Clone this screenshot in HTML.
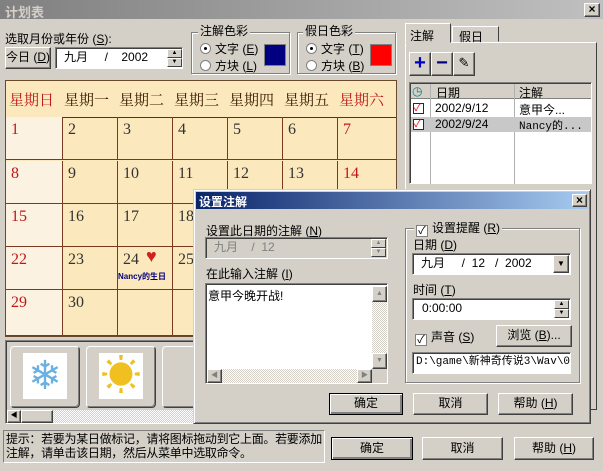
<!DOCTYPE html>
<html><head><meta charset="utf-8"><style>
*{box-sizing:border-box;margin:0;padding:0}
body{width:603px;height:471px;background:#d4d0c8;font-family:"Liberation Sans","Noto Sans CJK SC",sans-serif;font-size:12px;color:#000;position:relative;overflow:hidden}
.a{position:absolute}
.btn{position:absolute;background:#d4d0c8;border:1px solid;border-color:#fff #404040 #404040 #fff;box-shadow:inset -1px -1px #808080;text-align:center;font-size:12px}
.sunk{position:absolute;border:1px solid;border-color:#808080 #fff #fff #808080;box-shadow:inset 1px 1px #404040;background:#fff}
.grp{position:absolute;border:1px solid #808080;box-shadow:1px 1px #fff,inset 1px 1px #fff}
.lbl{position:absolute;background:#d4d0c8;padding:0 2px;font-size:12px;line-height:14px}
.cal{position:absolute;left:5px;top:80px;width:392px;height:257px;background:#fbe9bd;border:1px solid #6a4a2a}
.wd{position:absolute;top:8px;font-size:15px;color:#3a1a00;font-family:"Noto Serif CJK SC",serif;font-weight:normal}
.cell{position:absolute;width:55px;height:43px;border-right:1px solid #7a3a20;border-bottom:1px solid #7a3a20;font-family:"Liberation Serif","Noto Serif CJK SC",serif;font-size:16px;padding:4px 0 0 5px;color:#333}
.red{color:#c01818}
.dd{background:#fcf2e2}
.radio{display:inline-block;width:11px;height:11px;border-radius:50%;background:#fff;border:1px solid #808080;vertical-align:-1px;margin-right:4px;position:relative}
.radio.on:after{content:"";position:absolute;left:3px;top:3px;width:3px;height:3px;background:#000;border-radius:50%}
.chk{display:inline-block;width:12px;height:12px;background:#fff;border:1px solid #808080;vertical-align:-2px;margin-right:4px;font-size:11px;line-height:10px;text-align:center}
.spin{position:absolute;width:15px;background:#d4d0c8}
.spin div{height:50%;border:1px solid;border-color:#fff #404040 #404040 #fff;font-size:6px;text-align:center;line-height:6px}
</style></head><body>
<div class="a" style="left:0;top:0;width:603px;height:20px;background:linear-gradient(90deg,#808080,#c0c0c0);border-bottom:1px solid #d4d0c8"></div>
<div class="a" style="left:5px;top:2px;color:#d4d0c8;font-weight:bold;font-size:13px">计划表</div>
<div class="btn" style="left:584px;top:3px;width:16px;height:14px;line-height:11px;font-weight:bold">×</div>

<div class="a" style="left:5px;top:30px">选取月份或年份 (<u>S</u>):</div>
<div class="btn" style="left:5px;top:47px;width:46px;height:22px;line-height:19px">今日 (<u>D</u>)</div>
<div class="sunk" style="left:55px;top:47px;width:128px;height:22px;font-size:12px;line-height:19px;padding-left:8px">九月&nbsp;&nbsp;&nbsp;&nbsp;&nbsp;/&nbsp;&nbsp;&nbsp;&nbsp;2002</div>
<div class="spin" style="left:167px;top:49px;height:18px"><div>▲</div><div>▼</div></div>

<div class="grp" style="left:191px;top:32px;width:99px;height:42px"></div>
<div class="lbl" style="left:198px;top:24px">注解色彩</div>
<div class="a" style="left:200px;top:40px"><span class="radio on"></span>文字 (<u>E</u>)</div>
<div class="a" style="left:200px;top:57px"><span class="radio"></span>方块 (<u>L</u>)</div>
<div class="a" style="left:264px;top:44px;width:22px;height:22px;background:#000080;border:1px solid #808080"></div>

<div class="grp" style="left:297px;top:32px;width:99px;height:42px"></div>
<div class="lbl" style="left:303px;top:24px">假日色彩</div>
<div class="a" style="left:306px;top:40px"><span class="radio on"></span>文字 (<u>T</u>)</div>
<div class="a" style="left:306px;top:57px"><span class="radio"></span>方块 (<u>B</u>)</div>
<div class="a" style="left:370px;top:44px;width:22px;height:22px;background:#f00;border:1px solid #808080"></div>

<div class="cal">
<div class="wd red" style="left:3px">星期日</div><div class="wd" style="left:58px">星期一</div><div class="wd" style="left:113px">星期二</div><div class="wd" style="left:168px">星期三</div><div class="wd" style="left:223px">星期四</div><div class="wd" style="left:278px">星期五</div><div class="wd red" style="left:333px">星期六</div>
<div class="a" style="left:0;top:36px;width:390px;border-top:1px solid #6a2a10"></div>
</div>
<div id="grid"></div>
<script>
var g='',rows=[117,161,204,247,290],cols=[5,63,118,173,228,283,338];
for(var r=0;r<5;r++)for(var c=0;c<7;c++){var d=r*7+c+1;var t=d<=30?d:'';
g+='<div class="cell'+((c==0||c==6)?' red':'')+(c==0?' dd':'')+'" style="left:'+(cols[c]+(c==0?1:0))+'px;top:'+rows[r]+'px;width:'+(c==6?58:(c==0?57:55))+'px;'+(r==4?'height:46px;':'')+(c==6?'border-right:0;':'')+'">'+t+'</div>';}
document.getElementById('grid').innerHTML=g;
</script>
<div class="a" style="left:118px;top:271px;font-size:8px;color:#000080;font-weight:bold">Nancy的生日</div>
<div class="a" style="left:146px;top:246px;color:#d02020;font-size:18px">♥</div>

<div class="sunk" style="left:5px;top:340px;width:392px;height:84px;background:#d4d0c8"></div>
<div class="btn" style="left:10px;top:346px;width:70px;height:62px;border-radius:4px"><div style="margin:6px auto;width:44px;height:46px;background:#fff;color:#6ab0e0;font-size:40px;line-height:46px">❄</div></div>
<div class="btn" style="left:86px;top:346px;width:70px;height:62px;border-radius:4px"><div style="margin:6px auto;width:44px;height:46px;background:#fff;color:#f0c020;font-size:40px;line-height:46px">☀</div></div>
<div class="btn" style="left:162px;top:346px;width:40px;height:62px;border-radius:4px"></div>
<div class="a" style="left:7px;top:410px;width:190px;height:13px;background:repeating-conic-gradient(#fff 0 25%,#d4d0c8 0 50%) 0 0/2px 2px"></div>
<div class="btn" style="left:7px;top:410px;width:14px;height:13px;font-size:7px;line-height:10px">◀</div>
<div class="btn" style="left:21px;top:410px;width:32px;height:13px"></div>

<div class="a" style="left:405px;top:42px;width:192px;height:368px;border:1px solid;border-color:#fff #404040 #404040 #fff"></div>
<div class="a" style="left:405px;top:23px;width:46px;height:20px;border:1px solid;border-color:#fff #404040 transparent #fff;background:#d4d0c8;padding:3px 0 0 4px">注解</div>
<div class="a" style="left:452px;top:26px;width:47px;height:16px;border:1px solid;border-color:#fff #404040 transparent #fff;padding:1px 0 0 6px">假日</div>
<div class="btn" style="left:409px;top:52px;width:22px;height:24px;color:#0000c0;font-size:20px;font-weight:bold;line-height:20px">+</div>
<div class="btn" style="left:431px;top:52px;width:22px;height:24px;color:#000080;font-size:20px;font-weight:bold;line-height:20px">−</div>
<div class="btn" style="left:453px;top:52px;width:22px;height:24px;font-size:13px;line-height:20px">✎</div>
<div class="sunk" style="left:409px;top:82px;width:183px;height:102px"></div>
<div class="a" style="left:411px;top:84px;width:180px;height:15px;background:#d4d0c8;border-bottom:1px solid #808080"></div>
<div class="a" style="left:412px;top:84px;color:#008080">◷</div>
<div class="a" style="left:436px;top:84px">日期</div>
<div class="a" style="left:519px;top:84px">注解</div>
<div class="a" style="left:430px;top:84px;height:100px;border-left:1px solid #b0b0b0"></div>
<div class="a" style="left:514px;top:84px;height:100px;border-left:1px solid #b0b0b0"></div>
<div class="a" style="left:411px;top:117px;width:180px;height:15px;background:#c8c8c8"></div>
<div class="a" style="left:413px;top:103px;width:11px;height:11px;border:1px solid #800;color:#d00;font-size:10px;line-height:9px;background:#fff">✓</div>
<div class="a" style="left:413px;top:119px;width:11px;height:11px;border:1px solid #800;color:#d00;font-size:10px;line-height:9px;background:#fff">✓</div>
<div class="a" style="left:435px;top:101px">2002/9/12</div><div class="a" style="left:519px;top:101px">意甲今...</div>
<div class="a" style="left:435px;top:117px">2002/9/24</div><div class="a" style="left:519px;top:117px;font-family:'Liberation Mono','Noto Sans CJK SC',monospace;font-size:11px">Nancy的...</div>

<div class="sunk" style="left:3px;top:430px;width:322px;height:33px;background:#d4d0c8;box-shadow:none"></div>
<div class="a" style="left:6px;top:432px;line-height:14px;width:320px;font-size:12px;letter-spacing:-0.3px">提示：若要为某日做标记，请将图标拖动到它上面。若要添加注解，请单击该日期，然后从菜单中选取命令。</div>
<div class="btn" style="left:331px;top:437px;width:82px;height:23px;line-height:20px;border-color:#000;box-shadow:inset 1px 1px #fff,inset -2px -2px #808080">确定</div>
<div class="btn" style="left:422px;top:437px;width:81px;height:23px;line-height:20px">取消</div>
<div class="btn" style="left:514px;top:437px;width:80px;height:23px;line-height:20px">帮助 (<u>H</u>)</div>

<div class="a" style="left:193px;top:189px;width:398px;height:235px;background:#d4d0c8;border:1px solid;border-color:#d4d0c8 #404040 #404040 #d4d0c8;box-shadow:inset 1px 1px #fff,inset -1px -1px #808080"></div>
<div class="a" style="left:196px;top:192px;width:392px;height:17px;background:linear-gradient(90deg,#0a246a,#a6caf0)"></div>
<div class="a" style="left:199px;top:193px;color:#fff;font-weight:bold;font-size:12px">设置注解</div>
<div class="btn" style="left:572px;top:194px;width:15px;height:13px;line-height:10px;font-weight:bold">×</div>
<div class="a" style="left:206px;top:222px">设置此日期的注解 (<u>N</u>)</div>
<div class="sunk" style="left:205px;top:237px;width:183px;height:22px;background:#d4d0c8;color:#808080;line-height:19px;padding-left:8px">九月&nbsp;&nbsp;&nbsp;&nbsp;/&nbsp;&nbsp;12</div>
<div class="spin" style="left:371px;top:239px;height:18px"><div style="color:#808080">▲</div><div style="color:#808080">▼</div></div>
<div class="a" style="left:206px;top:265px">在此输入注解 (<u>I</u>)</div>
<div class="sunk" style="left:205px;top:283px;width:183px;height:101px;padding:3px 2px">意甲今晚开战!</div>
<div class="a" style="left:372px;top:286px;width:15px;height:83px;background:repeating-conic-gradient(#fff 0 25%,#d4d0c8 0 50%) 0 0/2px 2px"></div>
<div class="btn" style="left:372px;top:286px;width:15px;height:16px;font-size:7px;line-height:13px;color:#808080">▲</div>
<div class="btn" style="left:372px;top:353px;width:15px;height:16px;font-size:7px;line-height:13px;color:#808080">▼</div>
<div class="a" style="left:207px;top:369px;width:165px;height:14px;background:repeating-conic-gradient(#fff 0 25%,#d4d0c8 0 50%) 0 0/2px 2px"></div>
<div class="btn" style="left:207px;top:369px;width:15px;height:14px;font-size:7px;line-height:11px;color:#808080">◀</div>
<div class="btn" style="left:357px;top:369px;width:15px;height:14px;font-size:7px;line-height:11px;color:#808080">▶</div>
<div class="a" style="left:372px;top:369px;width:15px;height:14px;background:#d4d0c8"></div>

<div class="grp" style="left:405px;top:228px;width:175px;height:155px"></div>
<div class="lbl" style="left:414px;top:221px"><span class="chk">✓</span>设置提醒 (<u>R</u>)</div>
<div class="a" style="left:413px;top:236px">日期 (<u>D</u>)</div>
<div class="sunk" style="left:412px;top:253px;width:159px;height:22px;line-height:19px;padding-left:8px">九月&nbsp;&nbsp;&nbsp;&nbsp;&nbsp;/&nbsp;&nbsp;12&nbsp;&nbsp;&nbsp;/&nbsp;&nbsp;2002</div>
<div class="btn" style="left:553px;top:255px;width:16px;height:18px;font-size:8px;line-height:15px">▼</div>
<div class="a" style="left:413px;top:281px">时间 (<u>T</u>)</div>
<div class="sunk" style="left:412px;top:298px;width:159px;height:22px;line-height:19px;padding-left:9px">0:00:00</div>
<div class="spin" style="left:554px;top:300px;height:18px"><div>▲</div><div>▼</div></div>
<div class="a" style="left:415px;top:328px"><span class="chk">✓</span>声音 (<u>S</u>)</div>
<div class="btn" style="left:496px;top:325px;width:76px;height:22px;line-height:19px">浏览 (<u>B</u>)...</div>
<div class="sunk" style="left:412px;top:352px;width:159px;height:22px;line-height:19px;padding-left:3px;font-family:'Liberation Mono','Noto Sans CJK SC',monospace;font-size:11px;white-space:nowrap;overflow:hidden">D:\game\新神奇传说3\Wav\0</div>

<div class="btn" style="left:329px;top:393px;width:74px;height:22px;line-height:19px;border-color:#000;box-shadow:inset 1px 1px #fff,inset -2px -2px #808080">确定</div>
<div class="btn" style="left:413px;top:393px;width:75px;height:22px;line-height:19px">取消</div>
<div class="btn" style="left:498px;top:393px;width:75px;height:22px;line-height:19px">帮助 (<u>H</u>)</div>
</body></html>
